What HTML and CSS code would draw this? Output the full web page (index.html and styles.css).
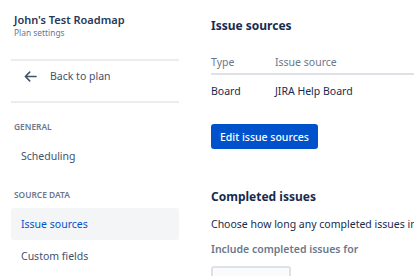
FILE: index.html
```html
<!DOCTYPE html>
<html lang="en">
<head>
  <meta charset="UTF-8" />
  <meta name="viewport" content="width=device-width, initial-scale=1.0" />
  <title>Plan settings</title>
  <link rel="stylesheet" href="styles.css">
</head>
<body>
  <aside class="sidebar">
    <div class="plan-header">
      <div class="plan-title">John's Test Roadmap</div>
      <div class="plan-sub">Plan settings</div>
    </div>
    <a class="back-link" href="#">
      <svg class="back-icon" width="19" height="19" viewBox="0 0 24 24">
        <path d="M19 12H5.5M11 6.5L5.5 12l5.5 5.5" fill="none" stroke="#42526e" stroke-width="2" stroke-linecap="round" stroke-linejoin="round"/>
      </svg>
      <span>Back to plan</span>
    </a>
    <div class="nav-label nav-label-first">General</div>
    <ul class="nav-list">
      <li class="nav-item">Scheduling</li>
    </ul>
    <div class="nav-label">Source data</div>
    <ul class="nav-list">
      <li class="nav-item active">Issue sources</li>
      <li class="nav-item">Custom fields</li>
    </ul>
  </aside>

  <main class="content">
    <h2 class="section-title">Issue sources</h2>
    <table class="sources">
      <thead>
        <tr><th class="col-type">Type</th><th>Issue source</th></tr>
      </thead>
      <tbody>
        <tr><td>Board</td><td>JIRA Help Board</td></tr>
      </tbody>
    </table>
    <button class="btn-primary">Edit issue sources</button>

    <h2 class="section-title completed-title">Completed issues</h2>
    <p class="help-text">Choose how long any completed issues in your plan should stay visible on the timeline.</p>
    <label class="field-label">Include completed issues for</label>
    <div class="select-box"></div>
  </main>
</body>
</html>
```

FILE: styles.css
```css
html, body {
  margin: 0;
  padding: 0;
  height: 100%;
  overflow: hidden;
}
body {
  display: flex;
  background: #fff;
  color: #172b4d;
  font-family: "Noto Sans", "Open Sans", sans-serif;
  font-size: 10.5px;
}

/* sidebar */
.sidebar {
  flex: none;
  width: 168px;
  padding: 0 11px;
}
.plan-header {
  padding: 12px 3px 20px;
  border-bottom: 2px solid #ebecf0;
}
.plan-title {
  font-size: 11px;
  font-weight: 600;
  line-height: 15px;
  color: #253858;
}
.plan-sub {
  font-size: 8.4px;
  line-height: 12px;
  color: #6b778c;
}
.back-link {
  display: flex;
  align-items: center;
  gap: 10px;
  height: 30px;
  padding: 0 0 10px 10px;
  color: #42526e;
  text-decoration: none;
  border-bottom: 2px solid #ebecf0;
}
.back-icon {
  display: block;
}
.nav-label {
  margin-top: 15px;
  padding-left: 3px;
  height: 16px;
  line-height: 16px;
  font-size: 8.4px;
  font-weight: 600;
  text-transform: uppercase;
  color: #6b778c;
}
.nav-label-first {
  margin-top: 16px;
}
.nav-list {
  list-style: none;
  margin: 5px 0 0;
  padding: 0;
}
.nav-item {
  height: 32px;
  line-height: 32px;
  padding-left: 10px;
  border-radius: 3px;
  color: #42526e;
}
.nav-item.active {
  background: #f4f5f7;
  color: #0052cc;
}

/* main */
.content {
  flex: none;
  width: 560px;
  padding: 18px 0 0 21px;
}
.section-title {
  margin: 0;
  font-size: 12px;
  font-weight: 700;
  line-height: 16px;
  color: #172b4d;
}
.sources {
  width: 100%;
  margin-top: 20px;
  border-collapse: collapse;
}
.sources th {
  text-align: left;
  font-weight: normal;
  color: #6b778c;
  line-height: 16px;
  padding: 0 0 3px;
  border-bottom: 2px solid #dfe1e6;
}
.sources .col-type {
  width: 64px;
}
.sources td {
  line-height: 16px;
  padding: 8px 0;
  color: #172b4d;
}
.btn-primary {
  display: block;
  margin-top: 17px;
  height: 25px;
  padding: 0 9px;
  border: none;
  border-radius: 3px;
  background: #0052cc;
  color: #fff;
  font-family: inherit;
  font-size: 10.5px;
  font-weight: 500;
}
.completed-title {
  margin-top: 40px;
}
.help-text {
  margin: 11px 0 0;
  line-height: 16px;
  white-space: nowrap;
}
.field-label {
  display: block;
  margin-top: 9px;
  line-height: 16px;
  font-weight: 600;
  color: #6b778c;
}
.select-box {
  margin-top: 9px;
  width: 76px;
  height: 30px;
  border: 2px solid #dfe1e6;
  border-radius: 3px;
  background: #fafbfc;
}
```
